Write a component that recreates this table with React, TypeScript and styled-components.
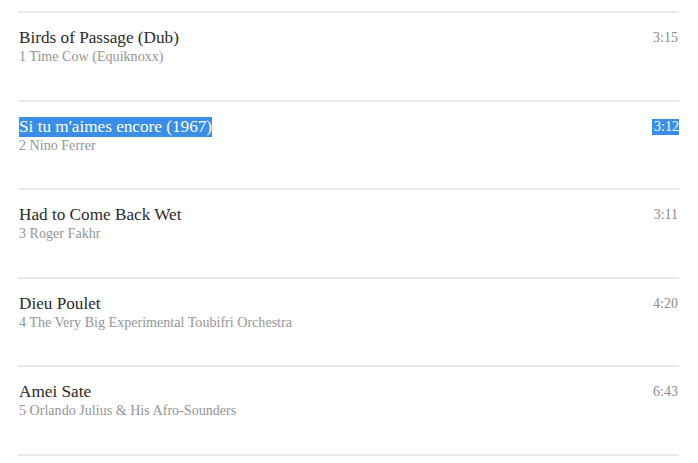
import React from "react";
import styled, { createGlobalStyle } from "styled-components";

const Global = createGlobalStyle`
  html, body { margin: 0; padding: 0; background: #fff; }
  body { font-family: "Liberation Serif", "Times New Roman", serif; }
`;

const List = styled.div`
  padding: 11px 19px 0 18px;
`;

const Row = styled.div`
  display: grid;
  grid-template-columns: 1fr auto;
  align-content: start;
  height: 88.6px;
  box-sizing: border-box;
  border-top: 2px solid #e9e9e9;
  padding-top: 15px;
  &:last-child { height: 2px; padding: 0; }
`;

const Info = styled.div`
  display: flex;
  flex-direction: column;
  padding-left: 1px;
`;

const Title = styled.span<{ $sel?: boolean }>`
  align-self: flex-start;
  font-size: 17.2px;
  line-height: 20px;
  color: ${(p) => (p.$sel ? "#fff" : "#2b2b2b")};
  background: ${(p) => (p.$sel ? "#3a8ee8" : "transparent")};
`;

const Sub = styled.span`
  font-size: 14.1px;
  line-height: 17px;
  color: #959595;
`;

const Time = styled.span<{ $sel?: boolean }>`
  align-self: start;
  margin-top: 2px;
  font-size: 14px;
  line-height: 16px;
  padding: 0 ${(p) => (p.$sel ? "0" : "1px")} 0 ${(p) => (p.$sel ? "2px" : "0")};
  color: ${(p) => (p.$sel ? "#fff" : "#8a8a8a")};
  background: ${(p) => (p.$sel ? "#3a8ee8" : "transparent")};
`;

const tracks = [
  { title: "Birds of Passage (Dub)", artist: "1 Time Cow (Equiknoxx)", time: "3:15" },
  { title: "Si tu m'aimes encore (1967)", artist: "2 Nino Ferrer", time: "3:12", sel: true },
  { title: "Had to Come Back Wet", artist: "3 Roger Fakhr", time: "3:11" },
  { title: "Dieu Poulet", artist: "4 The Very Big Experimental Toubifri Orchestra", time: "4:20" },
  { title: "Amei Sate", artist: "5 Orlando Julius & His Afro-Sounders", time: "6:43" },
];

export default function App() {
  return (
    <>
      <Global />
      <List>
        {tracks.map((t) => (
          <Row key={t.title}>
            <Info>
              <Title $sel={t.sel}>{t.title}</Title>
              <Sub>{t.artist}</Sub>
            </Info>
            <Time $sel={t.sel}>{t.time}</Time>
          </Row>
        ))}
        <Row />
      </List>
    </>
  );
}
